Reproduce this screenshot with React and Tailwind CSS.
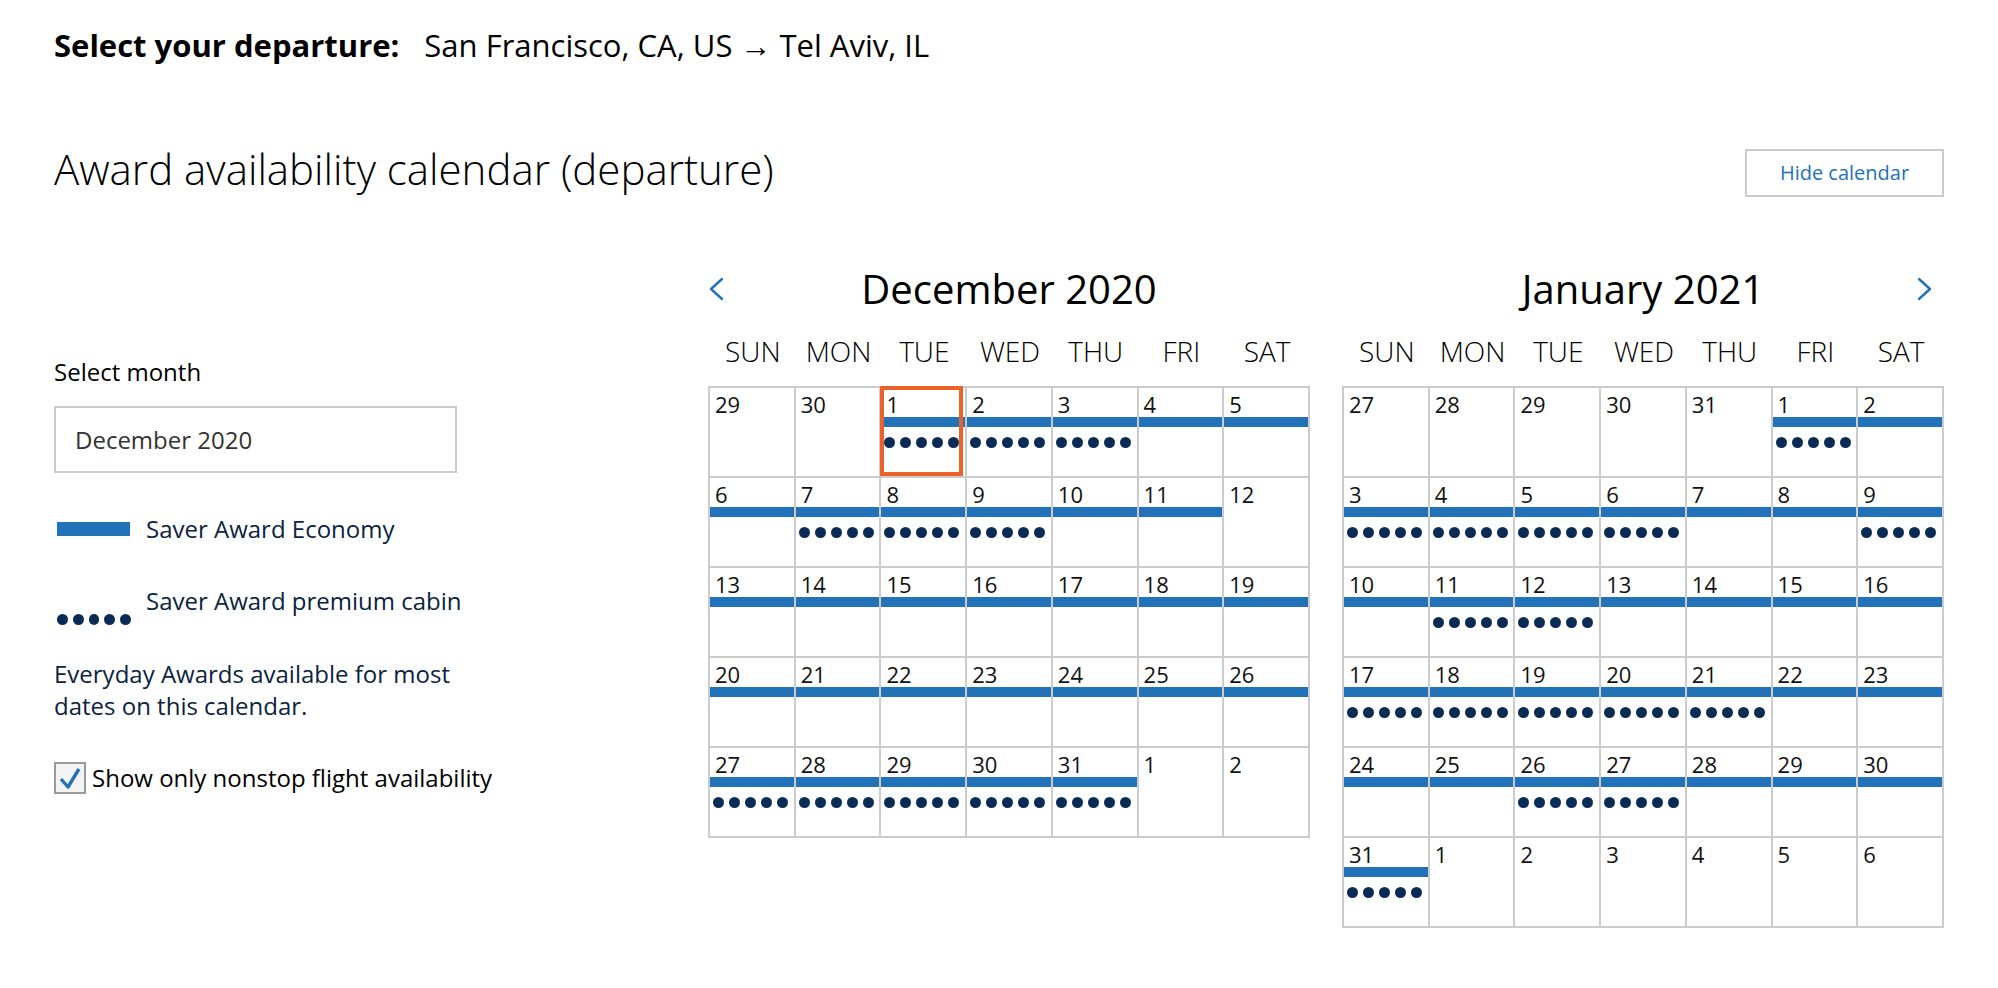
import React from 'react';

const BLUE = 'bg-[#2272b9]';

// d = day number, bar = saver economy, dots = saver premium, sel = selected
const december = [
  [{ d: 29 }, { d: 30 }, { d: 1, bar: 1, dots: 1, sel: 1 }, { d: 2, bar: 1, dots: 1 }, { d: 3, bar: 1, dots: 1 }, { d: 4, bar: 1 }, { d: 5, bar: 1 }],
  [{ d: 6, bar: 1 }, { d: 7, bar: 1, dots: 1 }, { d: 8, bar: 1, dots: 1 }, { d: 9, bar: 1, dots: 1 }, { d: 10, bar: 1 }, { d: 11, bar: 1 }, { d: 12 }],
  [13, 14, 15, 16, 17, 18, 19].map((d) => ({ d, bar: 1 })),
  [20, 21, 22, 23, 24, 25, 26].map((d) => ({ d, bar: 1 })),
  [{ d: 27, bar: 1, dots: 1 }, { d: 28, bar: 1, dots: 1 }, { d: 29, bar: 1, dots: 1 }, { d: 30, bar: 1, dots: 1 }, { d: 31, bar: 1, dots: 1 }, { d: 1 }, { d: 2 }],
];

const january = [
  [{ d: 27 }, { d: 28 }, { d: 29 }, { d: 30 }, { d: 31 }, { d: 1, bar: 1, dots: 1 }, { d: 2, bar: 1 }],
  [{ d: 3, bar: 1, dots: 1 }, { d: 4, bar: 1, dots: 1 }, { d: 5, bar: 1, dots: 1 }, { d: 6, bar: 1, dots: 1 }, { d: 7, bar: 1 }, { d: 8, bar: 1 }, { d: 9, bar: 1, dots: 1 }],
  [{ d: 10, bar: 1 }, { d: 11, bar: 1, dots: 1 }, { d: 12, bar: 1, dots: 1 }, { d: 13, bar: 1 }, { d: 14, bar: 1 }, { d: 15, bar: 1 }, { d: 16, bar: 1 }],
  [{ d: 17, bar: 1, dots: 1 }, { d: 18, bar: 1, dots: 1 }, { d: 19, bar: 1, dots: 1 }, { d: 20, bar: 1, dots: 1 }, { d: 21, bar: 1, dots: 1 }, { d: 22, bar: 1 }, { d: 23, bar: 1 }],
  [{ d: 24, bar: 1 }, { d: 25, bar: 1 }, { d: 26, bar: 1, dots: 1 }, { d: 27, bar: 1, dots: 1 }, { d: 28, bar: 1 }, { d: 29, bar: 1 }, { d: 30, bar: 1 }],
  [{ d: 31, bar: 1, dots: 1 }, { d: 1 }, { d: 2 }, { d: 3 }, { d: 4 }, { d: 5 }, { d: 6 }],
];

const weekdays = ['SUN', 'MON', 'TUE', 'WED', 'THU', 'FRI', 'SAT'];

function Dots() {
  return (
    <div className="flex gap-[5px]">
      {[0, 1, 2, 3, 4].map((i) => (
        <span key={i} className="block h-[11px] w-[11px] rounded-full bg-[#0b2b57] blur-[0.6px]" />
      ))}
    </div>
  );
}

function Chevron({ dir }) {
  return (
    <svg width="16" height="24" viewBox="0 0 16 24" fill="none">
      <polyline
        points={dir === 'left' ? '14,2 3,12 14,22' : '2,2 13,12 2,22'}
        stroke="#2272b9"
        strokeWidth="2.4"
        strokeLinecap="round"
        strokeLinejoin="round"
      />
    </svg>
  );
}

function Cell({ day }) {
  return (
    <div className="relative h-[90px] border-r-2 border-b-2 border-[#cccccc]">
      {day.sel && (
        <div className="absolute top-[-2px] left-[-1px] right-[2px] bottom-0 border-4 border-[#ea6228]" />
      )}
      <div className="pt-[3px] pl-[5px] text-[22px] leading-[26px] text-[#111]">{day.d}</div>
      <div className={`h-[10px] ${day.bar ? BLUE : ''}`} />
      {day.dots && (
        <div className="mt-[10px] pl-[3px]">
          <Dots />
        </div>
      )}
    </div>
  );
}

function Month({ title, rows, prev, next }) {
  return (
    <div className="w-[602px]">
      <div className="flex h-[52px] items-center">
        <div className="flex w-[27px] justify-start">{prev && <Chevron dir="left" />}</div>
        <div className="flex-1 text-center text-[40px] leading-[52px]">{title}</div>
        <div className="flex w-[27px] justify-start">{next && <Chevron dir="right" />}</div>
      </div>
      <div className="mt-[18px] grid grid-cols-7 pl-[2px] text-center text-[28px] font-light leading-[36px]">
        {weekdays.map((w) => (
          <div key={w}>{w}</div>
        ))}
      </div>
      <div className="mt-[17px] grid grid-cols-7 border-t-2 border-l-2 border-[#cccccc]">
        {rows.flat().map((day, i) => (
          <Cell key={i} day={day} />
        ))}
      </div>
    </div>
  );
}

function LeftPanel() {
  return (
    <div className="mt-[93px] w-[460px] text-[24px] leading-[32px]">
      <div>Select month</div>
      <div className="mt-[18px] flex h-[67px] w-[403px] items-center border-2 border-[#cccccc] pl-[19px] text-[#333333]">
        December 2020
      </div>

      <div className="mt-[40px] flex h-[32px] items-center text-[#0c2340]">
        <div className={`ml-[3px] h-[14px] w-[73px] ${BLUE}`} />
        <span className="ml-[16px]">Saver Award Economy</span>
      </div>

      <div className="mt-[40px] flex items-start text-[#0c2340]">
        <div className="ml-[3px] w-[74px] pt-[29px]">
          <Dots />
        </div>
        <span className="ml-[15px]">Saver Award premium cabin</span>
      </div>

      <p className="mt-[33px] w-[410px] text-[#0c2340]">
        Everyday Awards available for most dates on this calendar.
      </p>

      <label className="mt-[40px] flex items-center whitespace-nowrap">
        <span className="flex h-[32px] w-[32px] items-center justify-center border-2 border-[#9a9a9a] bg-[#f3f3f3]">
          <svg width="24" height="24" viewBox="0 0 24 24" fill="none">
            <polyline points="3,13 10,21 21,3" stroke="#2272b9" strokeWidth="3.4" strokeLinejoin="round" />
          </svg>
        </span>
        <span className="ml-[6px]">Show only nonstop flight availability</span>
      </label>
    </div>
  );
}

export default function App() {
  return (
    <div className="min-h-screen bg-white px-[54px] font-['Open_Sans',sans-serif] text-black">
      <div className="flex pt-[25px] text-[31px] leading-[40px]">
        <span className="font-bold">Select your departure:</span>
        <span className="ml-[25px]">San Francisco, CA, US → Tel Aviv, IL</span>
      </div>

      <div className="mt-[77px] flex items-start justify-between">
        <h1 className="text-[42px] font-light leading-[54px]">Award availability calendar (departure)</h1>
        <button className="mt-[7px] h-[48px] w-[199px] border-2 border-[#cccccc] bg-white text-[20px] text-[#2272b9]">
          Hide calendar
        </button>
      </div>

      <div className="mt-[66px] flex justify-between">
        <LeftPanel />
        <div className="flex gap-[32px]">
          <Month title="December 2020" rows={december} prev />
          <Month title="January 2021" rows={january} next />
        </div>
      </div>
    </div>
  );
}
